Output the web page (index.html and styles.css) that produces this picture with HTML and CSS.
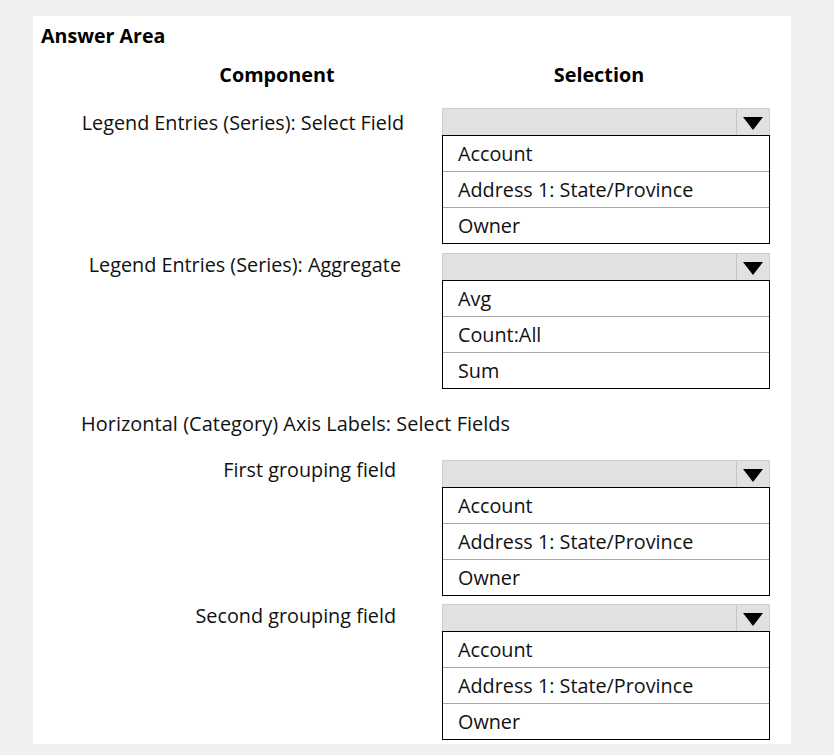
FILE: index.html
```html
<!DOCTYPE html>
<html>
<head>
<meta charset="utf-8">
<link rel="stylesheet" href="styles.css">
</head>
<body>
<div class="panel">
  <div class="title">Answer Area</div>
  <div class="heads">
    <div class="head head-comp">Component</div>
    <div class="head head-sel">Selection</div>
  </div>

  <div class="row row-1">
    <div class="label lbl-a">Legend Entries (Series): Select Field</div>
    <div class="dd">
      <div class="dd-head"><div class="dd-btn"><span class="tri"></span></div></div>
      <div class="dd-list">
        <div class="opt">Account</div>
        <div class="opt">Address 1: State/Province</div>
        <div class="opt">Owner</div>
      </div>
    </div>
  </div>

  <div class="row row-2">
    <div class="label lbl-b">Legend Entries (Series): Aggregate</div>
    <div class="dd">
      <div class="dd-head"><div class="dd-btn"><span class="tri"></span></div></div>
      <div class="dd-list">
        <div class="opt">Avg</div>
        <div class="opt">Count:All</div>
        <div class="opt">Sum</div>
      </div>
    </div>
  </div>

  <div class="section">Horizontal (Category) Axis Labels: Select Fields</div>

  <div class="row row-3">
    <div class="label lbl-c">First grouping field</div>
    <div class="dd">
      <div class="dd-head"><div class="dd-btn"><span class="tri"></span></div></div>
      <div class="dd-list">
        <div class="opt">Account</div>
        <div class="opt">Address 1: State/Province</div>
        <div class="opt">Owner</div>
      </div>
    </div>
  </div>

  <div class="row row-4">
    <div class="label lbl-d">Second grouping field</div>
    <div class="dd">
      <div class="dd-head"><div class="dd-btn"><span class="tri"></span></div></div>
      <div class="dd-list">
        <div class="opt">Account</div>
        <div class="opt">Address 1: State/Province</div>
        <div class="opt">Owner</div>
      </div>
    </div>
  </div>
</div>
</body>
</html>
```

FILE: styles.css
```css
html, body {
  margin: 0;
  padding: 0;
}
body {
  background: #efefef;
  font-family: "Open Sans", "Noto Sans", sans-serif;
  color: #111;
  width: 834px;
  height: 755px;
  overflow: hidden;
}
.panel {
  margin: 16px 0 0 33px;
  width: 758px;
  height: 728px;
  background: #fff;
  box-sizing: border-box;
  padding-top: 8px;
}
.title {
  font-weight: 700;
  font-size: 19.6px;
  line-height: 24px;
  padding-left: 8px;
  color: #000;
}
.heads {
  display: flex;
  margin-top: 15px;
  height: 24px;
}
.head {
  font-weight: 700;
  font-size: 19.8px;
  line-height: 24px;
  text-align: center;
  color: #000;
}
.head-comp {
  width: 488px;
}
.head-sel {
  width: 156px;
}
.row {
  display: flex;
}
.row-1 { margin-top: 21px; }
.row-2 { margin-top: 9px; }
.row-3 { margin-top: 23px; }
.row-4 { margin-top: 8px; }
.label {
  width: 409px;
  box-sizing: border-box;
  text-align: right;
  font-size: 19.8px;
  white-space: nowrap;
}
.lbl-a { padding-right: 38px; line-height: 29px; }
.lbl-b { padding-right: 41px; line-height: 23px; }
.lbl-c { padding-right: 46px; line-height: 20px; }
.lbl-d { padding-right: 46px; line-height: 23px; }
.section {
  margin-top: 21px;
  padding-left: 48px;
  font-size: 19.9px;
  letter-spacing: 0.05px;
  line-height: 27px;
}
.dd {
  width: 328px;
}
.dd-head {
  height: 27px;
  box-sizing: border-box;
  background: #e1e1e1;
  border: 1px solid #cfcfcf;
  border-bottom: none;
  display: flex;
  justify-content: flex-end;
}
.dd-btn {
  width: 32px;
  border-left: 1px solid #c4c4c4;
  display: flex;
  align-items: center;
  justify-content: center;
  padding-top: 2px;
}
.tri {
  width: 0;
  height: 0;
  border-left: 10px solid transparent;
  border-right: 10px solid transparent;
  border-top: 13px solid #000;
}
.dd-list {
  height: 109px;
  box-sizing: border-box;
  border: 1px solid #000;
  display: flex;
  flex-direction: column;
}
.opt {
  flex: 1;
  display: flex;
  align-items: center;
  padding-left: 15px;
  padding-bottom: 1px;
  font-size: 19.8px;
  color: #111;
  border-top: 1px solid #a8a8a8;
  white-space: nowrap;
}
.opt:first-child {
  border-top: none;
}
```
